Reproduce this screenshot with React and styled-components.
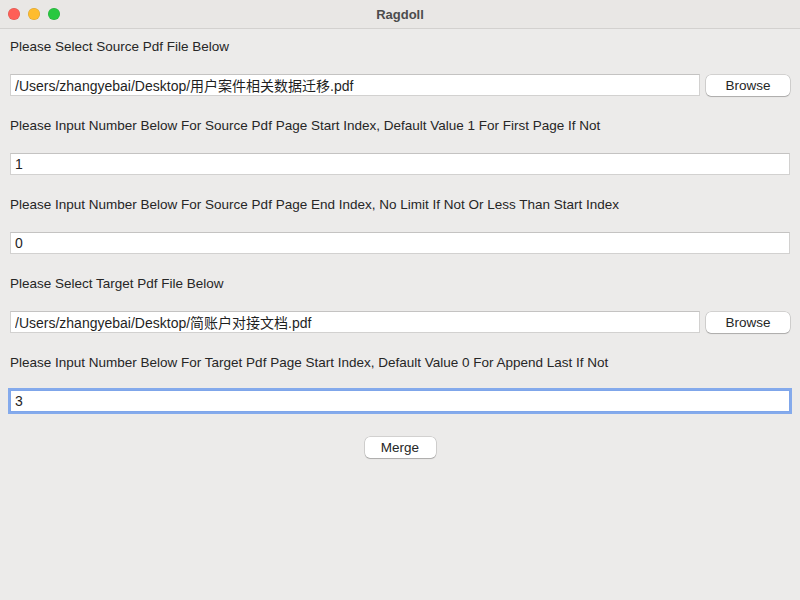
import React, { useState } from "react";
import styled, { createGlobalStyle } from "styled-components";

const GlobalStyle = createGlobalStyle`
  html, body {
    margin: 0;
    padding: 0;
    background: #ecebea;
  }
  * {
    box-sizing: border-box;
  }
`;

const Window = styled.div`
  width: 800px;
  height: 600px;
  display: flex;
  flex-direction: column;
  background: #ecebea;
  font-family: "Liberation Sans", "Noto Sans CJK SC", sans-serif;
  font-size: 13.5px;
  color: #262626;
  overflow: hidden;
`;

const TitleBar = styled.div`
  height: 29px;
  flex-shrink: 0;
  display: flex;
  align-items: center;
  position: relative;
  background: #e9e7e5;
  border-bottom: 1px solid #d3d1cf;

  h1 {
    flex: 1;
    margin: 0;
    text-align: center;
    font-size: 13px;
    font-weight: 700;
    color: #4c4c4c;
  }
`;

const Lights = styled.div`
  position: absolute;
  left: 8px;
  top: 8px;
  display: flex;
  gap: 8px;
`;

const Light = styled.span`
  width: 12px;
  height: 12px;
  border-radius: 50%;
  background: ${(p) => p.$color};
  box-shadow: inset 0 0 0 0.5px rgba(0, 0, 0, 0.15);
`;

const Content = styled.div`
  display: flex;
  flex-direction: column;
  padding: 9px 10px 0;
`;

const Field = styled.div`
  display: flex;
  flex-direction: column;
  gap: 19px;
  margin-bottom: 21px;
`;

const Label = styled.div`
  height: 17px;
  line-height: 17px;
  font-size: 13.5px;
  color: #262626;
`;

const Row = styled.div`
  display: flex;
  align-items: center;
  gap: 6px;
`;

const Input = styled.input`
  flex: 1;
  height: 22px;
  padding: 0 4px;
  border: 1px solid ${(p) => (p.$focused ? "#7fa6ea" : "#d2d1d0")};
  border-top-color: ${(p) => (p.$focused ? "#7fa6ea" : "#c4c3c2")};
  background: #fff;
  font: inherit;
  font-size: 14px;
  color: #1f1f1f;
  outline: none;
  box-shadow: ${(p) => (p.$focused ? "0 0 0 2px #84aaec" : "none")};
`;

const Button = styled.button`
  width: ${(p) => p.$width}px;
  height: 21px;
  padding: 0;
  border: none;
  border-radius: 5px;
  background: #fff;
  font: inherit;
  font-size: 13.5px;
  color: #262626;
  box-shadow: 0 0 0 0.5px rgba(0, 0, 0, 0.22), 0 1px 1px rgba(0, 0, 0, 0.18);
  cursor: default;
`;

const Actions = styled.div`
  display: flex;
  justify-content: center;
  margin-top: 4px;
`;

const fields = [
  {
    label: "Please Select Source Pdf File Below",
    value: "/Users/zhangyebai/Desktop/用户案件相关数据迁移.pdf",
    browse: true,
  },
  {
    label:
      "Please Input Number Below For Source Pdf Page Start Index, Default Value 1 For First Page If Not",
    value: "1",
  },
  {
    label:
      "Please Input Number Below For Source Pdf Page End Index, No Limit If Not Or Less Than Start Index",
    value: "0",
  },
  {
    label: "Please Select Target Pdf File Below",
    value: "/Users/zhangyebai/Desktop/简账户对接文档.pdf",
    browse: true,
  },
  {
    label:
      "Please Input Number Below For Target Pdf Page Start Index, Default Value 0 For Append Last If Not",
    value: "3",
    focused: true,
  },
];

export default function App() {
  const [values, setValues] = useState(fields.map((f) => f.value));

  const update = (i, v) =>
    setValues((prev) => prev.map((old, j) => (j === i ? v : old)));

  return (
    <Window>
      <GlobalStyle />
      <TitleBar>
        <Lights>
          <Light $color="#fe5f57" />
          <Light $color="#febc2e" />
          <Light $color="#28c840" />
        </Lights>
        <h1>Ragdoll</h1>
      </TitleBar>
      <Content>
        {fields.map((f, i) => (
          <Field key={i}>
            <Label>{f.label}</Label>
            <Row>
              <Input
                $focused={f.focused}
                value={values[i]}
                onChange={(e) => update(i, e.target.value)}
              />
              {f.browse && <Button $width={84}>Browse</Button>}
            </Row>
          </Field>
        ))}
        <Actions>
          <Button $width={71}>Merge</Button>
        </Actions>
      </Content>
    </Window>
  );
}
